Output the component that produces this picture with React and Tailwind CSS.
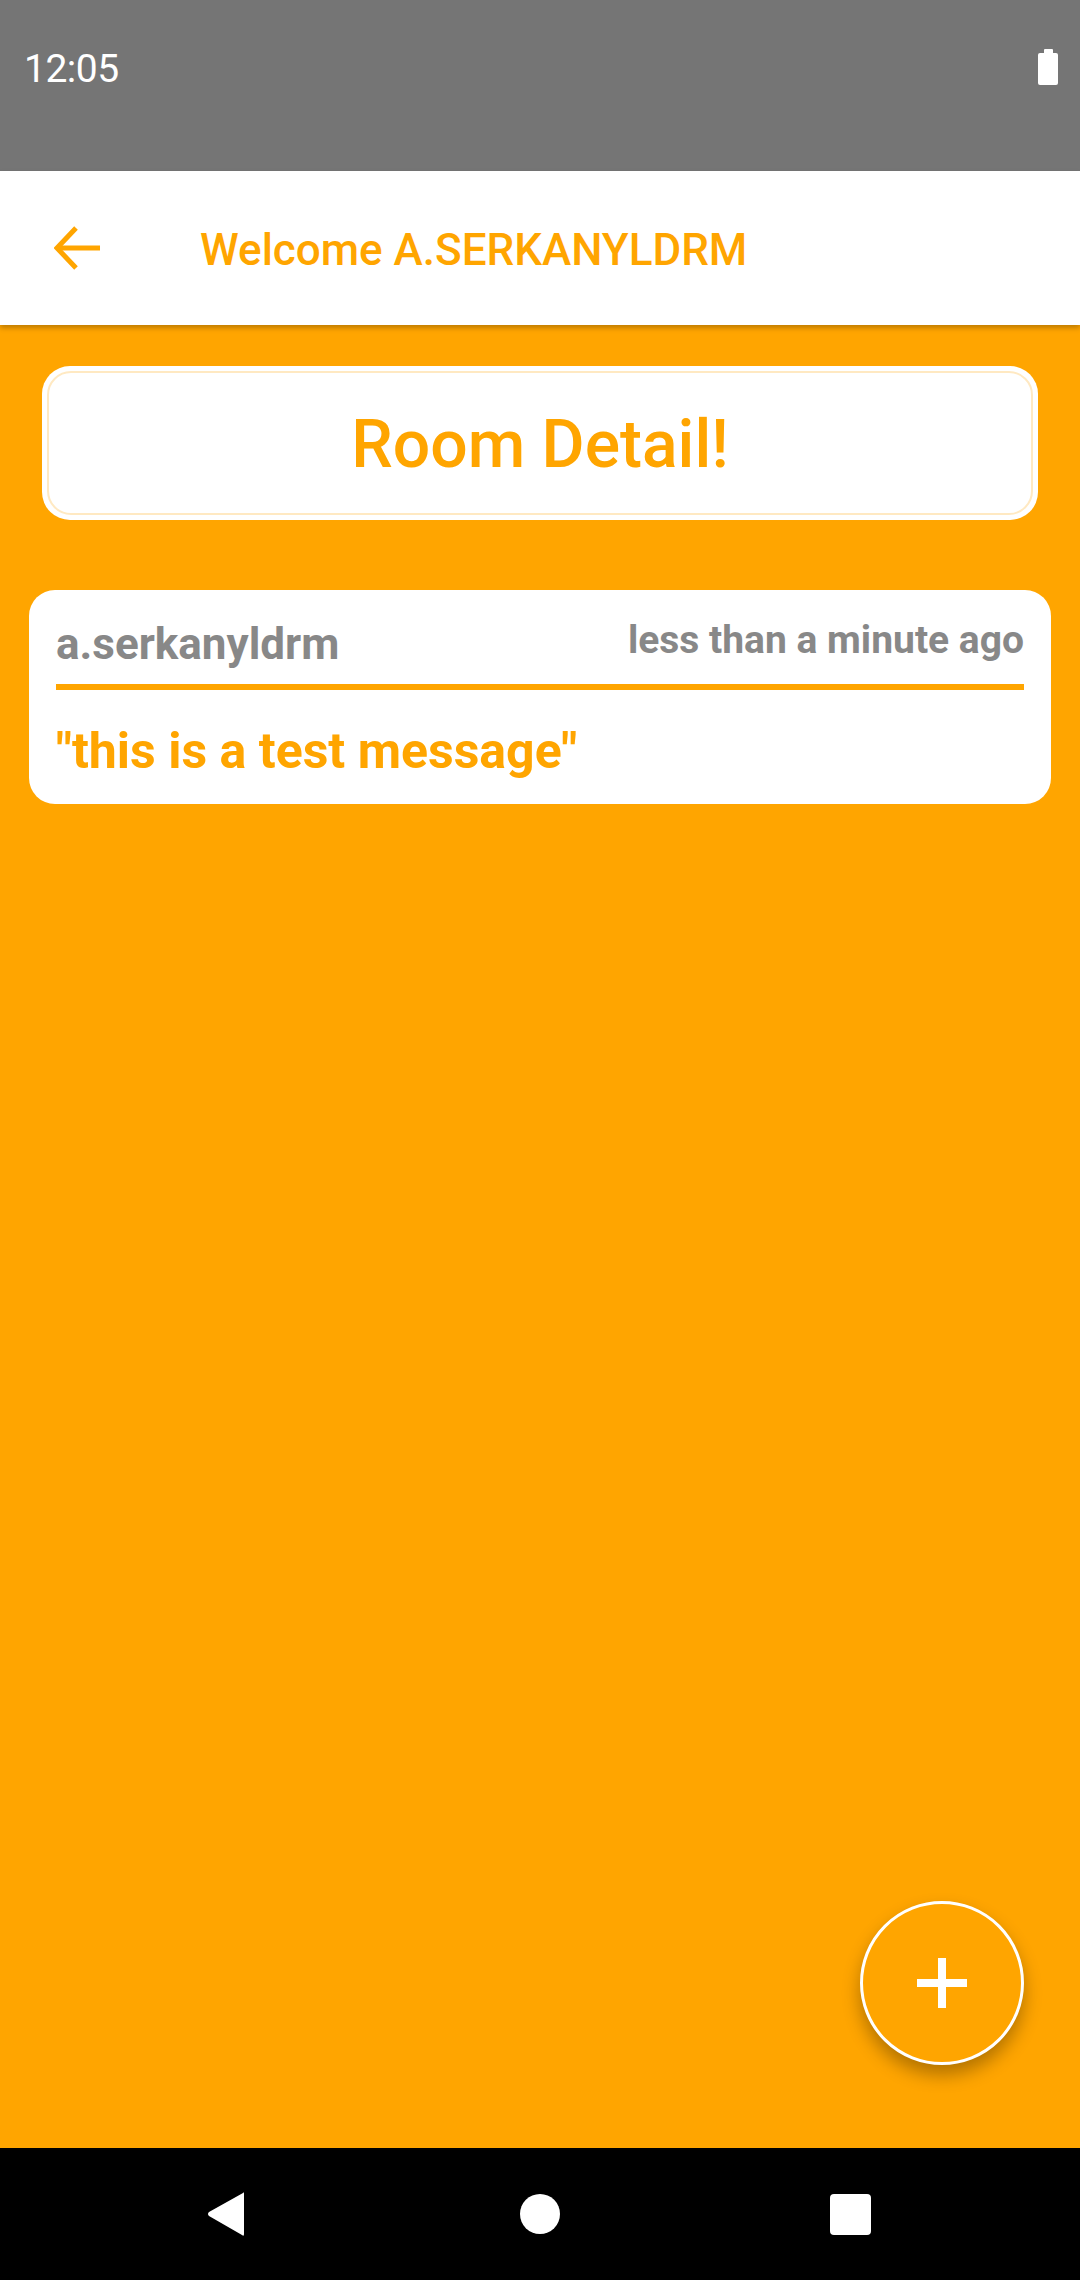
import React from 'react';

function StatusBar() {
  return (
    <div className="h-[171px] bg-[#757575] flex items-start justify-between px-[24px] pt-[50px]">
      <span className="text-[39px] leading-none text-white tracking-[-0.5px]">12:05</span>
      <div className="mt-[-1px] mr-[-2px] flex flex-col items-center">
        <div className="w-[9px] h-[4px] bg-white rounded-t-[1px]" />
        <div className="w-[20px] h-[32px] bg-white rounded-[2px]" />
      </div>
    </div>
  );
}

function AppBar() {
  return (
    <div className="relative z-10 h-[154px] bg-white flex items-center shadow-[0_3px_5px_rgba(0,0,0,0.25)]">
      <div className="w-[200px] flex items-center pl-[54px]">
        <svg width="46" height="44" viewBox="0 0 46 44" fill="none" stroke="#FFA500" strokeWidth="5">
          <path d="M46 22H5" />
          <path d="M22 2L3 22L22 42" strokeLinejoin="miter" />
        </svg>
      </div>
      <span className="pt-[4px] text-[44px] font-medium text-[#FFA500] leading-none">Welcome A.SERKANYLDRM</span>
    </div>
  );
}

function MessageCard({ user, time, text }) {
  return (
    <div className="mx-[29px] bg-white rounded-[26px] px-[27px] pt-[28px] pb-[25px]">
      <div className="flex items-start justify-between border-b-[6px] border-[#FFA500] pb-[14px]">
        <span className="text-[44px] font-bold text-[#888888] leading-[52px]">{user}</span>
        <span className="text-[39px] font-bold text-[#888888] leading-[44px]">{time}</span>
      </div>
      <p className="mt-[33px] text-[50px] font-bold text-[#FFA500] leading-[56px]">"{text}"</p>
    </div>
  );
}

export default function App() {
  return (
    <div className="w-[1080px] h-[2280px] flex flex-col bg-[#FFA500] font-['Roboto',sans-serif] overflow-hidden">
      <StatusBar />
      <AppBar />
      <div className="relative flex-1 flex flex-col pt-[41px]">
        <div className="mx-[42px] h-[154px] bg-white rounded-[28px] p-[5px]">
          <div className="h-full pt-[4px] rounded-[24px] border-2 border-[#FFE9C2] flex items-center justify-center">
            <span className="text-[66px] font-medium text-[#FFA500] leading-none">Room Detail!</span>
          </div>
        </div>
        <div className="mt-[70px]">
          <MessageCard user="a.serkanyldrm" time="less than a minute ago" text="this is a test message" />
        </div>
        <button className="absolute left-[860px] top-[1576px] w-[164px] h-[164px] rounded-full bg-[#FFA500] border-[3px] border-white flex items-center justify-center shadow-[0_10px_18px_rgba(0,0,0,0.3)]">
          <svg width="50" height="50" viewBox="0 0 50 50" fill="white">
            <rect x="21" y="0" width="8" height="50" />
            <rect x="0" y="21" width="50" height="8" />
          </svg>
        </button>
      </div>
      <div className="h-[132px] bg-black flex items-center">
        <div className="w-[207px]" />
        <svg width="38" height="46" viewBox="0 0 38 46" fill="white">
          <path d="M36 2 Q37 0 37 3 L37 43 Q37 46 35 44 L2 25 Q0 23 2 21 Z" />
        </svg>
        <div className="w-[275px]" />
        <div className="w-[40px] h-[40px] rounded-full bg-white" />
        <div className="w-[270px]" />
        <div className="w-[41px] h-[41px] rounded-[4px] bg-white" />
      </div>
    </div>
  );
}
